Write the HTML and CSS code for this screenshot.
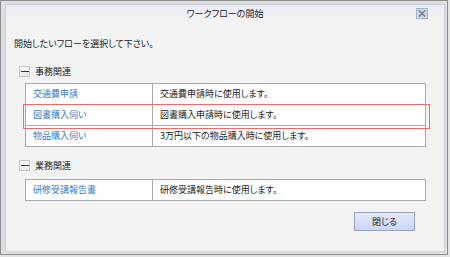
FILE: index.html
```html
<!DOCTYPE html>
<html lang="ja">
<head>
    <meta charset="UTF-8">
    <title>ワークフローの開始</title>
    <link rel="stylesheet" href="styles.css">
</head>
<body>
    <div class="window">
        <div class="dialog">
            <!-- タイトルバー -->
            <div class="title-bar">
                <div class="title-text">ワークフローの開始</div>
                <div class="close-btn">
                    <svg width="12" height="11" viewBox="0 0 12 11">
                        <path d="M3 2.5 L9 8.5 M9 2.5 L3 8.5" stroke="#7a7a7a" stroke-width="1.4" fill="none"/>
                    </svg>
                </div>
            </div>

            <div class="content">
                <p class="lead">開始したいフローを選択して下さい。</p>

                <!-- 事務関連 -->
                <div class="group-head">
                    <span class="toggle"></span>
                    <span>事務関連</span>
                </div>
                <div class="flow-table">
                    <div class="flow-row">
                        <div class="flow-name">交通費申請</div>
                        <div class="flow-desc">交通費申請時に使用します。</div>
                    </div>
                    <div class="flow-row">
                        <div class="flow-name">図書購入伺い</div>
                        <div class="flow-desc">図書購入申請時に使用します。</div>
                    </div>
                    <div class="flow-row">
                        <div class="flow-name">物品購入伺い</div>
                        <div class="flow-desc">3万円以下の物品購入時に使用します。</div>
                    </div>
                    <div class="highlight"></div>
                </div>

                <!-- 業務関連 -->
                <div class="group-head second">
                    <span class="toggle"></span>
                    <span>業務関連</span>
                </div>
                <div class="flow-table">
                    <div class="flow-row">
                        <div class="flow-name">研修受講報告書</div>
                        <div class="flow-desc">研修受講報告時に使用します。</div>
                    </div>
                </div>

                <div class="actions">
                    <div class="btn">閉じる</div>
                </div>
            </div>
        </div>
    </div>
</body>
</html>
```

FILE: styles.css
```css
* {
    margin: 0;
    padding: 0;
    box-sizing: border-box;
}

body {
    background: #e4e4e4;
    font-family: "Noto Sans CJK JP", "Noto Sans", sans-serif;
    font-size: 9px;
    font-feature-settings: "palt";
    color: #222;
    width: 450px;
    height: 257px;
    overflow: hidden;
}

/* 外枠 */
.window {
    width: 448px;
    height: 255px;
    border: 1px solid #8e8e8e;
    background: #dcdfe4;
    padding: 3px 2px 2px 4px;
}

.dialog {
    width: 440px;
    height: 248px;
    border: 1px solid #cdcfd3;
    background: #f3f3f3;
    display: flex;
    flex-direction: column;
}

/* タイトルバー */
.title-bar {
    height: 17px;
    display: flex;
    align-items: center;
    padding-left: 28px;
    background: linear-gradient(#e8ecf5, #f3f3f3);
}

.title-text {
    flex: 1;
    text-align: center;
    color: #222;
}

.close-btn {
    width: 12px;
    height: 11px;
    margin-right: 16px;
    margin-top: -1px;
    background: #c9d5ea;
    border: 1px solid #a7b6cf;
    display: flex;
}

.close-btn svg {
    margin: -1px;
}

/* 本文 */
.content {
    padding: 0 18px 0 8px;
}

.lead {
    line-height: 12px;
    margin-top: 16px;
}

.group-head {
    display: flex;
    align-items: center;
    gap: 5px;
    height: 12px;
    margin: 15px 0 6px 5px;
}

.group-head.second {
    margin-top: 12px;
    margin-bottom: 8px;
}

.toggle {
    width: 11px;
    height: 11px;
    border: 1px solid #c4c4c4;
    background: linear-gradient(#fafafa, #e8e8e8);
    position: relative;
}

.toggle::after {
    content: "";
    position: absolute;
    left: 1px;
    right: 0;
    top: 4px;
    height: 1px;
    background: #333;
}

/* フロー一覧 */
.flow-table {
    margin-left: 11px;
    border: 1px solid #a9a9a9;
    border-bottom: none;
    background: #fff;
    position: relative;
}

.flow-row {
    display: flex;
    height: 21px;
    border-bottom: 1px solid #a9a9a9;
}

.flow-name {
    width: 127px;
    border-right: 1px solid #a9a9a9;
    padding-left: 7px;
    line-height: 20px;
    color: #3a78c4;
}

.flow-desc {
    flex: 1;
    padding-left: 7px;
    line-height: 20px;
}

.highlight {
    position: absolute;
    left: -3px;
    top: 20px;
    width: 407px;
    height: 25px;
    border: 1px solid #ef6b6b;
}

/* ボタン */
.actions {
    display: flex;
    justify-content: flex-end;
    margin-top: 11px;
    padding-right: 11px;
}

.btn {
    width: 61px;
    height: 19px;
    border: 1px solid #97a3bd;
    background: linear-gradient(#e3e9fc, #c9d5fa);
    text-align: center;
    line-height: 17px;
    color: #222;
}
```
